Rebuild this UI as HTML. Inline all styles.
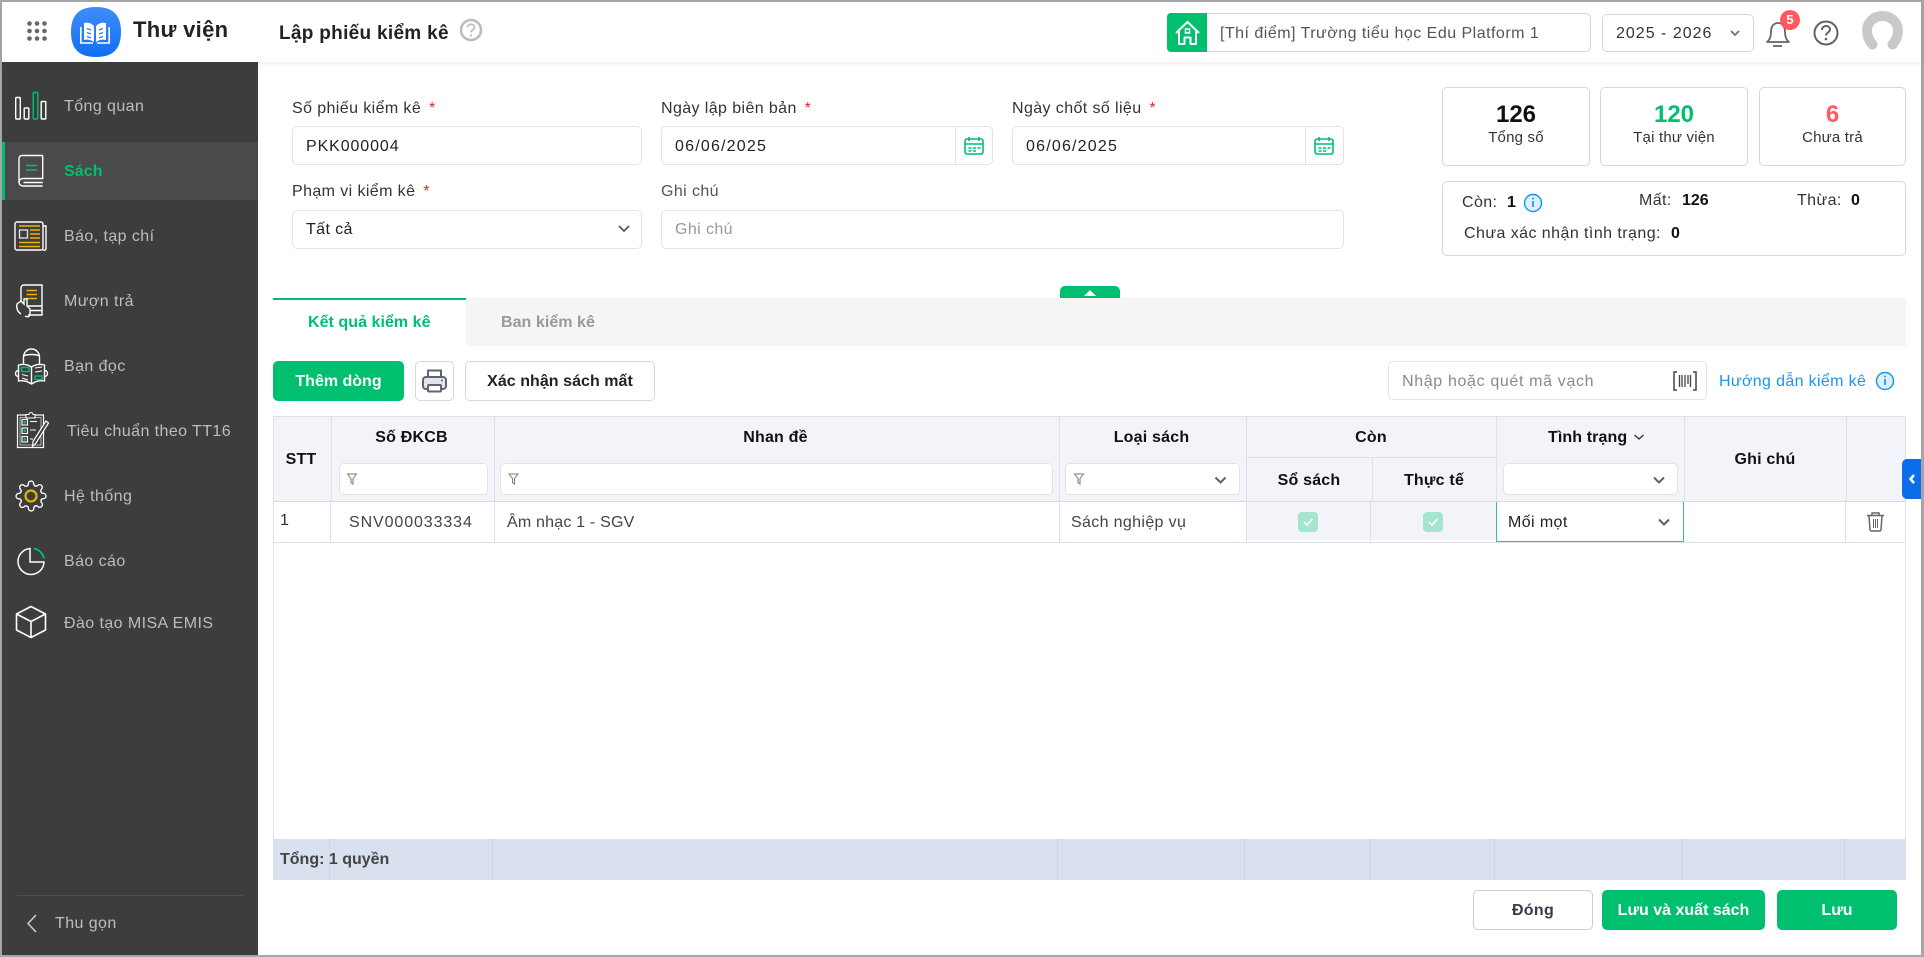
<!DOCTYPE html>
<html lang="vi"><head><meta charset="utf-8"><title>Lập phiếu kiểm kê</title>
<style>
*{box-sizing:border-box}
html,body{margin:0;padding:0;width:1924px;height:957px;overflow:hidden;background:#fff}
body{position:relative;font-family:"Liberation Sans",Arial,sans-serif;font-size:16px;color:#333;letter-spacing:.4px}
.a{position:absolute}
.t{position:absolute;white-space:nowrap;line-height:20px;height:20px;margin-top:1px}
.b{font-weight:700}
.c{text-align:center}
.box{position:absolute;background:#fff;border:1px solid #e2e4e8;border-radius:5px}
.box2{position:absolute;background:#fff;border:1px solid #d5d7db;border-radius:5px}
.nav{color:#bdbdbd;font-size:16px;letter-spacing:.42px}
.req{color:#f5222d;margin-left:3px}
.btn{position:absolute;background:#00bf6f;color:#fff;border-radius:5px;font-weight:700;text-align:center;line-height:41px;height:40px;font-size:16px;letter-spacing:0}
.th{color:#111;font-weight:700;font-size:16px;letter-spacing:.2px}
svg{position:absolute;left:0;top:0;pointer-events:none}
</style></head><body>

<!-- frame -->
<div class="a" style="left:0;top:0;width:1924px;height:2px;background:#a6a6a6"></div>
<div class="a" style="left:0;top:955px;width:1924px;height:2px;background:#a6a6a6"></div>
<div class="a" style="left:0;top:0;width:2px;height:957px;background:#a6a6a6"></div>
<div class="a" style="left:1921px;top:0;width:3px;height:957px;background:#a6a6a6"></div>

<!-- header -->
<div class="a" style="left:2px;top:2px;width:1919px;height:60px;background:#fff;box-shadow:0 2px 5px rgba(0,0,0,.07)"></div>

<!-- sidebar -->
<div class="a" style="left:2px;top:62px;width:256px;height:893px;background:#3d3d3d"></div>
<div class="a" style="left:2px;top:142px;width:256px;height:58px;background:#4a4a4a"></div>
<div class="a" style="left:2px;top:142px;width:3px;height:58px;background:#00bf6f"></div>
<div class="a" style="left:17px;top:895px;width:226px;height:1px;background:#4a5058"></div>
<div class="t nav" style="left:64px;top:96px">Tổng quan</div>
<div class="t nav b" style="left:64px;top:161px;color:#00bf6f;letter-spacing:.1px">Sách</div>
<div class="t nav" style="left:64px;top:226px">Báo, tạp chí</div>
<div class="t nav" style="left:64px;top:291px">Mượn trả</div>
<div class="t nav" style="left:64px;top:356px">Bạn đọc</div>
<div class="t nav" style="left:67px;top:421px">Tiêu chuẩn theo TT16</div>
<div class="t nav" style="left:64px;top:486px">Hệ thống</div>
<div class="t nav" style="left:64px;top:551px">Báo cáo</div>
<div class="t nav" style="left:64px;top:613px">Đào tạo MISA EMIS</div>
<div class="t nav" style="left:55px;top:913px">Thu gọn</div>

<!-- header text -->
<div class="t b" style="left:133px;top:19px;font-size:22px;color:#222;letter-spacing:.3px">Thư viện</div>
<div class="t b" style="left:279px;top:23px;font-size:19px;color:#222;letter-spacing:.3px">Lập phiếu kiểm kê</div>
<div class="box2" style="left:1167px;top:13px;width:424px;height:39px"></div>
<div class="a" style="left:1167px;top:13px;width:40px;height:39px;background:#00bf6f;border-radius:4px 0 0 4px"></div>
<div class="t" style="left:1220px;top:23px;color:#555;letter-spacing:.48px">[Thí điểm] Trường tiểu học Edu Platform 1</div>
<div class="box2" style="left:1602px;top:14px;width:152px;height:38px"></div>
<div class="t" style="left:1616px;top:23px;color:#333;letter-spacing:1px">2025 - 2026</div>

<!-- form -->
<div class="t" style="left:292px;top:98px">Số phiếu kiểm kê <span class="req">*</span></div>
<div class="box" style="left:292px;top:126px;width:350px;height:39px"></div>
<div class="t" style="left:306px;top:136px;color:#222;letter-spacing:.9px">PKK000004</div>
<div class="t" style="left:661px;top:98px">Ngày lập biên bản <span class="req">*</span></div>
<div class="box" style="left:661px;top:126px;width:332px;height:39px"></div>
<div class="a" style="left:955px;top:127px;width:1px;height:37px;background:#e2e4e8"></div>
<div class="t" style="left:675px;top:136px;color:#222;letter-spacing:1.2px">06/06/2025</div>
<div class="t" style="left:1012px;top:98px">Ngày chốt số liệu <span class="req">*</span></div>
<div class="box" style="left:1012px;top:126px;width:332px;height:39px"></div>
<div class="a" style="left:1305px;top:127px;width:1px;height:37px;background:#e2e4e8"></div>
<div class="t" style="left:1026px;top:136px;color:#222;letter-spacing:1.2px">06/06/2025</div>
<div class="t" style="left:292px;top:181px">Phạm vi kiểm kê <span class="req">*</span></div>
<div class="box" style="left:292px;top:210px;width:350px;height:39px"></div>
<div class="t" style="left:306px;top:219px;color:#222">Tất cả</div>
<div class="t" style="left:661px;top:181px;color:#555">Ghi chú</div>
<div class="box" style="left:661px;top:210px;width:683px;height:39px"></div>
<div class="t" style="left:675px;top:219px;color:#999">Ghi chú</div>

<!-- stats -->
<div class="box2" style="left:1442px;top:87px;width:148px;height:79px"></div>
<div class="box2" style="left:1600px;top:87px;width:148px;height:79px"></div>
<div class="box2" style="left:1759px;top:87px;width:147px;height:79px"></div>
<div class="t b c" style="left:1442px;top:104px;width:148px;font-size:24px;color:#111;letter-spacing:0">126</div>
<div class="t b c" style="left:1600px;top:104px;width:148px;font-size:24px;color:#00bf6f;letter-spacing:0">120</div>
<div class="t b c" style="left:1759px;top:104px;width:147px;font-size:24px;color:#ff5a5f;letter-spacing:0">6</div>
<div class="t c" style="left:1442px;top:127px;width:148px;font-size:15px;color:#333;letter-spacing:.2px">Tổng số</div>
<div class="t c" style="left:1600px;top:127px;width:148px;font-size:15px;color:#333;letter-spacing:.2px">Tại thư viện</div>
<div class="t c" style="left:1759px;top:127px;width:147px;font-size:15px;color:#333;letter-spacing:.2px">Chưa trả</div>
<div class="box2" style="left:1442px;top:181px;width:464px;height:75px"></div>
<div class="t" style="left:1462px;top:192px">Còn:</div>
<div class="t b" style="left:1507px;top:192px;color:#111">1</div>
<div class="t" style="left:1639px;top:190px">Mất:</div>
<div class="t b" style="left:1682px;top:190px;color:#111;letter-spacing:0">126</div>
<div class="t" style="left:1797px;top:190px">Thừa:</div>
<div class="t b" style="left:1851px;top:190px;color:#111">0</div>
<div class="t" style="left:1464px;top:223px;letter-spacing:.44px">Chưa xác nhận tình trạng:</div>
<div class="t b" style="left:1671px;top:223px;color:#111">0</div>

<!-- tabs -->
<div class="a" style="left:466px;top:298px;width:1440px;height:48px;background:#f5f5f5"></div>
<div class="a" style="left:273px;top:298px;width:193px;height:2px;background:#00bf6f"></div>
<div class="a" style="left:1060px;top:286px;width:60px;height:12px;background:#00bf6f;border-radius:5px 5px 0 0"></div>
<div class="t b" style="left:308px;top:312px;color:#00bf6f;letter-spacing:.05px">Kết quả kiểm kê</div>
<div class="t b" style="left:501px;top:312px;color:#999;letter-spacing:.05px">Ban kiểm kê</div>

<!-- toolbar -->
<div class="btn" style="left:273px;top:361px;width:131px">Thêm dòng</div>
<div class="box2" style="left:415px;top:361px;width:39px;height:40px"></div>
<div class="box2 b" style="left:465px;top:361px;width:190px;height:40px;line-height:39px;text-align:center;color:#222;letter-spacing:.05px">Xác nhận sách mất</div>
<div class="box" style="left:1388px;top:361px;width:319px;height:39px"></div>
<div class="t" style="left:1402px;top:371px;color:#8a8a8a;letter-spacing:.65px">Nhập hoặc quét mã vạch</div>
<div class="t" style="left:1719px;top:371px;color:#1a96ea;letter-spacing:.35px">Hướng dẫn kiểm kê</div>

<!-- table header -->
<div class="a" style="left:273px;top:416px;width:1633px;height:86px;background:#f3f4f9;border:1px solid #dfe1ea;border-bottom:1px solid #d6d8e2"></div>
<div class="a" style="left:331px;top:416px;width:1px;height:86px;background:#dfe1ea"></div>
<div class="a" style="left:494px;top:416px;width:1px;height:86px;background:#dfe1ea"></div>
<div class="a" style="left:1059px;top:416px;width:1px;height:86px;background:#dfe1ea"></div>
<div class="a" style="left:1246px;top:416px;width:1px;height:86px;background:#dfe1ea"></div>
<div class="a" style="left:1372px;top:457px;width:1px;height:45px;background:#dfe1ea"></div>
<div class="a" style="left:1246px;top:457px;width:250px;height:1px;background:#dfe1ea"></div>
<div class="a" style="left:1496px;top:416px;width:1px;height:86px;background:#dfe1ea"></div>
<div class="a" style="left:1684px;top:416px;width:1px;height:86px;background:#dfe1ea"></div>
<div class="a" style="left:1846px;top:416px;width:1px;height:86px;background:#dfe1ea"></div>
<div class="t th c" style="left:272px;top:449px;width:58px">STT</div>
<div class="t th c" style="left:330px;top:427px;width:163px">Số ĐKCB</div>
<div class="t th c" style="left:493px;top:427px;width:565px">Nhan đề</div>
<div class="t th c" style="left:1058px;top:427px;width:187px">Loại sách</div>
<div class="t th c" style="left:1246px;top:427px;width:250px">Còn</div>
<div class="t th c" style="left:1246px;top:470px;width:126px">Sổ sách</div>
<div class="t th c" style="left:1372px;top:470px;width:124px">Thực tế</div>
<div class="t th" style="left:1548px;top:427px;letter-spacing:.1px">Tình trạng</div>
<div class="t th c" style="left:1684px;top:449px;width:162px">Ghi chú</div>
<div class="box" style="left:339px;top:463px;width:149px;height:32px"></div>
<div class="box" style="left:500px;top:463px;width:553px;height:32px"></div>
<div class="box" style="left:1065px;top:463px;width:175px;height:32px"></div>
<div class="box" style="left:1503px;top:463px;width:175px;height:32px"></div>

<!-- table row -->
<div class="a" style="left:273px;top:502px;width:1633px;height:41px;background:#fff;border:1px solid #dfe1ea;border-top:0"></div>
<div class="a" style="left:1246px;top:502px;width:250px;height:38px;background:#f3f4f9"></div>
<div class="a" style="left:330px;top:502px;width:1px;height:40px;background:#dfe1ea"></div>
<div class="a" style="left:494px;top:502px;width:1px;height:40px;background:#dfe1ea"></div>
<div class="a" style="left:1059px;top:502px;width:1px;height:40px;background:#dfe1ea"></div>
<div class="a" style="left:1246px;top:502px;width:1px;height:40px;background:#dfe1ea"></div>
<div class="a" style="left:1370px;top:502px;width:1px;height:40px;background:#dfe1ea"></div>
<div class="a" style="left:1845px;top:502px;width:1px;height:40px;background:#dfe1ea"></div>
<div class="a" style="left:1496px;top:502px;width:188px;height:40px;background:#fff;border:1px solid #36c08f;border-top:0"></div>
<div class="a" style="left:1298px;top:512px;width:20px;height:20px;background:#a6e5cd;border-radius:4px"></div>
<div class="a" style="left:1423px;top:512px;width:20px;height:20px;background:#a6e5cd;border-radius:4px"></div>
<div class="t" style="left:280px;top:510px;color:#333;letter-spacing:0">1</div>
<div class="t" style="left:349px;top:512px;color:#444;letter-spacing:.9px">SNV000033334</div>
<div class="t" style="left:507px;top:512px;color:#444;letter-spacing:.2px">Âm nhạc 1 - SGV</div>
<div class="t" style="left:1071px;top:512px;color:#444;letter-spacing:.35px">Sách nghiệp vụ</div>
<div class="t" style="left:1508px;top:512px;color:#222">Mối mọt</div>

<!-- table body sides + footer -->
<div class="a" style="left:273px;top:543px;width:1px;height:296px;background:#e6e6e6"></div>
<div class="a" style="left:1905px;top:543px;width:1px;height:296px;background:#e6e6e6"></div>
<div class="a" style="left:273px;top:839px;width:1633px;height:41px;background:#d9e0ee"></div>
<div class="a" style="left:329px;top:839px;width:1px;height:41px;background:#ced6e6"></div>
<div class="a" style="left:492px;top:839px;width:1px;height:41px;background:#ced6e6"></div>
<div class="a" style="left:1057px;top:839px;width:1px;height:41px;background:#ced6e6"></div>
<div class="a" style="left:1244px;top:839px;width:1px;height:41px;background:#ced6e6"></div>
<div class="a" style="left:1370px;top:839px;width:1px;height:41px;background:#ced6e6"></div>
<div class="a" style="left:1494px;top:839px;width:1px;height:41px;background:#ced6e6"></div>
<div class="a" style="left:1682px;top:839px;width:1px;height:41px;background:#ced6e6"></div>
<div class="a" style="left:1844px;top:839px;width:1px;height:41px;background:#ced6e6"></div>
<div class="t b" style="left:280px;top:849px;color:#444;letter-spacing:0">Tổng: 1 quyền</div>

<!-- bottom buttons -->
<div class="box2 b" style="left:1473px;top:890px;width:120px;height:40px;line-height:39px;text-align:center;color:#3a3a4a;letter-spacing:.3px;border-color:#cfcfcf">Đóng</div>
<div class="btn" style="left:1602px;top:890px;width:163px">Lưu và xuất sách</div>
<div class="btn" style="left:1777px;top:890px;width:120px">Lưu</div>

<!-- side tab -->
<div class="a" style="left:1902px;top:459px;width:19px;height:40px;background:#0a6ee8;border-radius:5px 0 0 5px"></div>

<!-- icons -->
<svg width="1924" height="957" viewBox="0 0 1924 957" fill="none">
<defs><linearGradient id="lg" x1="0" y1="0" x2="0" y2="1"><stop offset="0" stop-color="#3f8dfb"/><stop offset="1" stop-color="#0f70f2"/></linearGradient></defs>
<!-- grid -->
<g fill="#666"><circle cx="29.5" cy="23.5" r="2.3"/><circle cx="37" cy="23.5" r="2.3"/><circle cx="44.5" cy="23.5" r="2.3"/><circle cx="29.5" cy="31" r="2.3"/><circle cx="37" cy="31" r="2.3"/><circle cx="44.5" cy="31" r="2.3"/><circle cx="29.5" cy="38.5" r="2.3"/><circle cx="37" cy="38.5" r="2.3"/><circle cx="44.5" cy="38.5" r="2.3"/></g>
<!-- logo -->
<path d="M96 7C113 7 121 15 121 32S113 57 96 57 71 49 71 32 79 7 96 7Z" fill="url(#lg)"/>
<path d="M84 23C88 22 91 23 94 26V42C91 40 88 39 84 40ZM106 23C102 22 99 23 96 26V42C99 40 102 39 106 40Z" fill="#fff"/>
<path d="M80.800 27V43H93M109.200 27V43H97" stroke="#fff" stroke-width="1.600"/>
<path d="M87 28.500l4 1.500M87 32.500l4 1.500M87 36.500l4 1.500M103 28.500l-4 1.500M103 32.500l-4 1.500M103 36.500l-4 1.500" stroke="#2e80f8" stroke-width="1.400"/>
<!-- title help -->
<circle cx="471" cy="30" r="10" stroke="#bcbcbc" stroke-width="2.500"/>
<path d="M467.500 27.500c0-2 1.500-3.200 3.500-3.200s3.500 1.200 3.500 3c0 2.600-3.500 2.600-3.500 5.200" stroke="#bcbcbc" stroke-width="1.800"/><circle cx="471" cy="35.500" r="1.100" fill="#bcbcbc"/>
<!-- home -->
<path d="M1176 33L1187.500 22L1199 33M1179 31V44H1184.500V37.500H1190.500V44H1196V31" stroke="#fff" stroke-width="2" stroke-linejoin="round"/><rect x="1185.500" y="29" width="4" height="4" stroke="#fff" stroke-width="1.500"/>
<!-- year chevron -->
<path d="M1731 31l4 4 4-4" stroke="#6b7280" stroke-width="1.800"/>
<!-- bell -->
<path d="M1767 42c3-2 4-5 4-10 0-6 3-9 7-9s7 3 7 9c0 5 1 8 4 10Z" stroke="#666" stroke-width="1.800" stroke-linejoin="round"/><path d="M1773 46h9" stroke="#666" stroke-width="1.800"/>
<circle cx="1790" cy="20" r="10" fill="#ff5a5f"/>
<!-- help -->
<circle cx="1826" cy="33" r="11.500" stroke="#5f6368" stroke-width="2"/>
<path d="M1822 30c0-2.500 1.800-4 4-4s4 1.400 4 3.500c0 3-4 3-4 6" stroke="#5f6368" stroke-width="2"/><circle cx="1826" cy="39" r="1.300" fill="#5f6368"/>
<!-- avatar -->
<path d="M1872.500 44.500C1868.500 40 1867 35 1867 30.500A15.500 14.500 0 0 1 1898 30.500C1898 35 1896.500 40 1892.500 44.500" stroke="#c9c9c9" stroke-width="10" stroke-linecap="round"/>
<!-- select chevron -->
<path d="M619 226l5 5 5-5" stroke="#555" stroke-width="1.800"/>
<!-- calendars -->
<g stroke="#00bf6f" stroke-width="1.600"><rect x="965" y="139" width="18" height="15" rx="2"/><path d="M965 144h18M969 137v4M979 137v4"/><path d="M968.500 148h3M973 148h3M977.500 148h3M968.500 151h3M973 151h3" stroke-width="1.500"/></g>
<g stroke="#00bf6f" stroke-width="1.600"><rect x="1315" y="139" width="18" height="15" rx="2"/><path d="M1315 144h18M1319 137v4M1329 137v4"/><path d="M1318.500 148h3M1323 148h3M1327.500 148h3M1318.500 151h3M1323 151h3" stroke-width="1.500"/></g>
<!-- info icons -->
<circle cx="1533" cy="203" r="8.500" fill="#dff0fd" stroke="#1a96ea" stroke-width="1.500"/><path d="M1533 201v6" stroke="#1a96ea" stroke-width="1.700"/><circle cx="1533" cy="198.500" r="1" fill="#1a96ea"/>
<circle cx="1885" cy="381" r="8.500" fill="#dff0fd" stroke="#1a96ea" stroke-width="1.500"/><path d="M1885 379v6" stroke="#1a96ea" stroke-width="1.700"/><circle cx="1885" cy="376.500" r="1" fill="#1a96ea"/>
<!-- collapse tri -->
<path d="M1084 296l6-6 6 6Z" fill="#fff"/>
<!-- printer -->
<g stroke="#5f6470" stroke-width="2"><path d="M428 377v-6.500h13v6.500"/><rect x="423" y="377" width="23" height="12" rx="3" fill="#e3e5ea"/><rect x="428" y="385" width="13" height="6.500" rx="1" fill="#fff"/></g><circle cx="442" cy="380.500" r="1" fill="#5f6470"/>
<!-- barcode -->
<g stroke="#444" stroke-width="1.500"><path d="M1677 372h-3v18h3M1693 372h3v18h-3"/><path d="M1679.500 375v12M1682 375v12M1685 375v12M1688 375v9M1690.500 375v12" stroke-width="1.300"/></g>
<!-- filters -->
<g stroke="#7a7a7a" stroke-width="1"><path d="M347.500 474h9l-3.500 4.500v5.500l-2-1.500v-4Z"/><path d="M509 474h9l-3.500 4.500v5.500l-2-1.500v-4Z"/><path d="M1074.500 474h9l-3.500 4.500v5.500l-2-1.500v-4Z"/></g>
<!-- chevrons -->
<path d="M1215.500 477.500l5 5 5-5" stroke="#5a6072" stroke-width="2"/>
<path d="M1654 477.500l5 5 5-5" stroke="#5a6072" stroke-width="2"/>
<path d="M1634.500 435l4.500 4 4.500-4" stroke="#333" stroke-width="1.400"/>
<path d="M1659 519.500l5 5 5-5" stroke="#5a6072" stroke-width="2"/>
<!-- row checks -->
<path d="M1304 522l3 3 5.500-6" stroke="#fff" stroke-width="1.500"/><path d="M1429 522l3 3 5.500-6" stroke="#fff" stroke-width="1.500"/>
<!-- trash -->
<g stroke="#666" stroke-width="1.500"><path d="M1867 515.500h17M1872 515.500v-2.500h7v2.500"/><path d="M1869 516l1 13.500c0 .8.700 1.500 1.500 1.500h8c.8 0 1.500-.7 1.500-1.500l1-13.500"/><path d="M1873.500 519v9M1875.500 519v9M1877.500 519v9" stroke-width="1"/></g>
<!-- side tab chev -->
<path d="M1914 475l-3.500 4 3.500 4" stroke="#fff" stroke-width="2.500"/>

<!-- sidebar icons -->
<g stroke="#fff" stroke-width="1.400">
<rect x="15.700" y="97.500" width="4.600" height="21.500" rx=".8"/><rect x="24.200" y="108" width="4.600" height="11" rx=".8"/><rect x="33.200" y="92.500" width="4.600" height="26.500" rx=".8" stroke="#00bf6f"/><rect x="41.200" y="101.500" width="4.600" height="17.500" rx=".8"/>
<!-- book -->
<path d="M42.700 155.500H22a3 3 0 0 0-3 3V182a4 4 0 0 0 4 4H42.700M42.700 155.500V178.500H23a4 4 0 0 0-4 3.500M23.500 182.500H42.700"/>
<path d="M26 165.500H37M26 170H37" stroke="#00bf6f"/>
<!-- news -->
<rect x="15" y="222" width="28" height="28" rx="2"/><path d="M43 226h3v22a2 2 0 0 1-3 2" />
<path d="M19 226H40M30 230H40M30 234H40M30 238H40M19 242.500H40M19 246.500H40" stroke="#eab308"/><rect x="19.500" y="230" width="8" height="8" stroke="#ddd"/>
<!-- borrow -->
<path d="M21 302V288a3 3 0 0 1 3-3H42V306M42 306H28M42 306V315H28M30 310.500H42"/>
<path d="M26.500 290.500H37M26.500 294.500H37M26.500 298.500H37" stroke="#eab308"/>
<path d="M21 314C18 312 16 309 17 304L21 301 24 304V299H27V306L30 309V315C29 317 27 317 25 316"/>
<!-- reader -->
<path d="M23.500 365V357A8 8 0 0 1 39.500 357V365M23.500 356C27 354 36 354 39.500 356"/>
<path d="M31.500 367C27 364 23 364 18.500 365V381C23 380 27 381 31.500 384C36 381 40 380 44.500 381V365C40 364 36 364 31.500 367ZM31.500 367V384"/>
<path d="M18.500 370.500C14.500 370.500 14.500 376.500 18.500 376.500M44.500 370.500C48.500 370.500 48.500 376.500 44.500 376.500"/>
<rect x="21.500" y="367.500" width="7.500" height="4" stroke="#00bf6f"/><rect x="35" y="376" width="7" height="3.500" stroke="#00bf6f"/>
<path d="M22 374.500L28 376M22 378L28 380M35 368L42 367M35 372L42 371" stroke-width="1"/>
<!-- clipboard -->
<rect x="17.500" y="415" width="26" height="32.500" stroke-width="1.200"/><rect x="20" y="417.500" width="21" height="27.500" stroke-width=".6"/>
<path d="M26 418V414.500H29A2 2 0 0 1 33 414.500H35V418Z" fill="#3d3d3d" stroke-width="1.100"/>
<rect x="22" y="419.500" width="5.500" height="5.500" stroke-width="1.100"/><rect x="22" y="428" width="5.500" height="5.500" stroke-width="1.100"/><rect x="22" y="436.500" width="5.500" height="5.500" stroke-width="1.100"/>
<path d="M23.500 422.200h2.500M23.500 430.700h2.500M23.500 439.200h2.500" stroke="#00bf6f" stroke-width="2.500"/>
<path d="M30 421.500H37M30 430H36M30 439H33" stroke-width="1"/>
<path d="M46 421L48.500 423L36 443L32.500 446.500L33 441.500Z" fill="#3d3d3d" stroke-width="1.200"/>
<!-- gear -->
<path transform="translate(14.700 479.700) scale(1.360)" d="M19.400 15a1.650 1.650 0 0 0 .33 1.820l.06.06a2 2 0 0 1 0 2.830 2 2 0 0 1-2.830 0l-.06-.06a1.650 1.650 0 0 0-1.820-.33 1.650 1.650 0 0 0-1 1.510V21a2 2 0 0 1-2 2 2 2 0 0 1-2-2v-.09A1.650 1.650 0 0 0 9 19.400a1.650 1.650 0 0 0-1.820.33l-.06.06a2 2 0 0 1-2.830 0 2 2 0 0 1 0-2.830l.06-.06a1.650 1.650 0 0 0 .33-1.820 1.650 1.650 0 0 0-1.510-1H3a2 2 0 0 1-2-2 2 2 0 0 1 2-2h.09A1.650 1.650 0 0 0 4.600 9a1.650 1.650 0 0 0-.33-1.820l-.06-.06a2 2 0 0 1 0-2.830 2 2 0 0 1 2.830 0l.06.06a1.650 1.650 0 0 0 1.820.33H9a1.650 1.650 0 0 0 1-1.510V3a2 2 0 0 1 2-2 2 2 0 0 1 2 2v.09a1.650 1.650 0 0 0 1 1.510 1.650 1.650 0 0 0 1.820-.33l.06-.06a2 2 0 0 1 2.830 0 2 2 0 0 1 0 2.830l-.06.06a1.650 1.650 0 0 0-.33 1.820V9a1.650 1.650 0 0 0 1.510 1H21a2 2 0 0 1 2 2 2 2 0 0 1-2 2h-.09a1.650 1.650 0 0 0-1.510 1z" stroke-width="1"/>
<circle cx="31" cy="496" r="5.500" stroke="#eab308" stroke-width="2.200"/>
<!-- pie -->
<path d="M30 548.500A13 13 0 1 0 44 562H30Z" stroke-width="1.500"/>
<path d="M34 548.500A13 13 0 0 1 44 558.500" stroke="#00bf6f" stroke-width="1.800"/>
<!-- cube -->
<path d="M31 606.500L45.500 614V630L31 637.500L16.500 630V614ZM16.500 614L31 621.500L45.500 614M31 621.500V637.500" stroke-width="1.600" stroke-linejoin="round"/>
</g>
<path d="M36 915L28 923.500L36 932" stroke="#ccc" stroke-width="1.600"/>
</svg>
<div class="t b c" style="left:1780px;top:9px;width:20px;color:#fff;font-size:13px;letter-spacing:0">5</div>
</body></html>
